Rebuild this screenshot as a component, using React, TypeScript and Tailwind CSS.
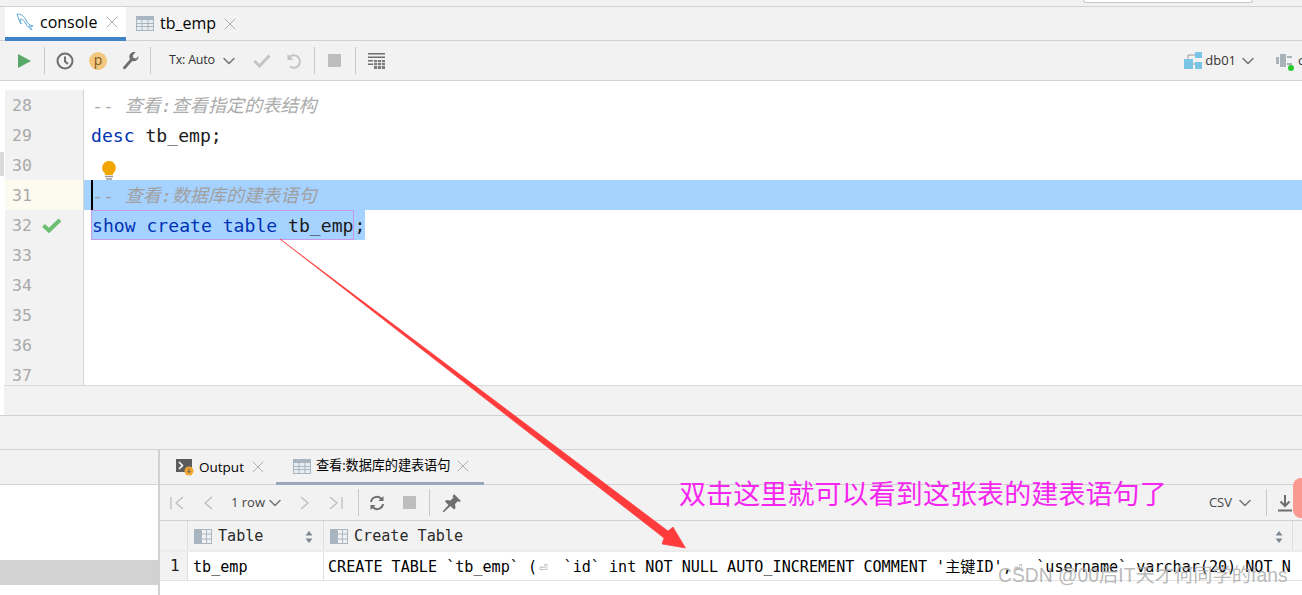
import React from "react";
import { ChevronDown, X } from "lucide-react";

const mono = "font-['DejaVu_Sans_Mono','Noto_Sans_CJK_SC',monospace]";
const ui = "font-['Open_Sans','Noto_Sans_CJK_SC',sans-serif]";

function TableIcon({ className = "" }: { className?: string }) {
  return (
    <svg width="18" height="15" viewBox="0 0 18 15" className={className}>
      <rect x="0" y="0" width="18" height="15" fill="#a9b5c0" />
      <rect x="1" y="4" width="16" height="10" fill="#e8edf0" />
      <path d="M6 4v10M12 4v10M1 7.5h16M1 10.5h16" stroke="#a9b5c0" strokeWidth="1" />
    </svg>
  );
}

function ColIcon() {
  return (
    <svg width="18" height="15" viewBox="0 0 18 15" className="shrink-0">
      <rect x="0" y="0" width="7" height="15" fill="#a9b5c0" />
      <rect x="7.5" y="0.5" width="10" height="14" fill="#f2f2f2" stroke="#a9b5c0" />
      <path d="M8 5h9M8 10h9M12.5 1v13" stroke="#a9b5c0" />
    </svg>
  );
}

function Sep() {
  return <div className="w-px h-[27px] bg-[#c9c9c9] shrink-0" />;
}

function Close({ className = "" }: { className?: string }) {
  return <X size={20} strokeWidth={1.1} className={`-my-[3px] -mr-[3px] shrink-0 text-[#a8a8a8] ${className}`} />;
}

function Chev({ className = "" }: { className?: string }) {
  return <ChevronDown size={20} strokeWidth={1.9} className={`-my-[3px] -mr-[3px] shrink-0 text-[#777] ${className}`} />;
}

function SortIcon() {
  return (
    <svg width="8" height="12" viewBox="0 0 8 12">
      <path d="M4 0l3.5 4.5h-7zM4 12L.5 7.5h7z" fill="#7f8790" />
    </svg>
  );
}

const lines: { n: number; content?: React.ReactNode; current?: boolean; check?: boolean; selected?: boolean }[] = [
  { n: 28, content: <span className="text-[#ababab] ml-px">-- <span className="italic">查看:查看指定的表结构</span></span> },
  { n: 29, content: <span><span className="text-[#0033b3]">desc</span> tb_emp;</span> },
  { n: 30 },
  { n: 31, current: true, selected: true, content: <span className="text-[#a0a0a0] ml-px">-- <span className="italic">查看:数据库的建表语句</span></span> },
  {
    n: 32,
    check: true,
    content: (
      <span className="bg-[#a6d2ff] inline-block align-top h-[30px]">
        <span className="inline-block align-top border border-[#c79ae8] h-[30px] leading-[30px]">
          <span className="text-[#0033b3]">show create table</span> tb_emp
        </span>
        <span className="inline-block align-top leading-[32px]">;</span>
      </span>
    ),
  },
  { n: 33 },
  { n: 34 },
  { n: 35 },
  { n: 36 },
  { n: 37 },
];

export default function App() {
  return (
    <div className={`relative w-[1302px] h-[595px] overflow-hidden bg-white text-black ${ui}`}>
      {/* top strip */}
      <div className="h-[7px] bg-[#f2f2f2] border-b border-[#d1d1d1] flex justify-end">
        <div className="w-[170px] h-[3px] mr-[49px] bg-white border-x border-b border-[#c8c8c8] rounded-b-[3px]" />
      </div>

      {/* tabs */}
      <div className="h-[34px] bg-[#f2f2f2] border-b border-[#d1d1d1] flex pl-[5px] items-stretch">
        <div className="w-[121px] bg-white border-b-[4px] border-[#4083c9] flex items-center pl-[11px] -mb-px">
          <svg width="19" height="18" viewBox="0 0 19 18" fill="none" stroke="#5fa8d8" strokeWidth="1">
            <path d="M1 1c4 0 7 2 9 6 1 3 3 5 7 6-2 1-3 0-4 0 1 1 2 2 3 4-3-2-5-4-6-6C9 8 6 6 4 6c0 2 1 3 1 5C3 8 2 4 1 1z" />
          </svg>
          <span className="ml-[5px] text-[16px] leading-none -mt-px">console</span>
          <Close className="ml-[5px]" />
        </div>
        <div className="flex items-center pl-[10px]">
          <TableIcon />
          <span className="ml-[6px] text-[16px] leading-none -mt-px">tb_emp</span>
          <Close className="ml-[4px]" />
        </div>
      </div>

      {/* toolbar */}
      <div className="h-[40px] bg-[#f2f2f2] border-b border-[#d1d1d1] flex items-center pl-[18px] relative overflow-hidden">
        <svg width="13" height="14" viewBox="0 0 13 14"><path d="M0 0l13 7-13 7z" fill="#59a869" /></svg>
        <div className="ml-[13px]"><Sep /></div>
        <svg width="18" height="18" viewBox="0 0 18 18" fill="none" stroke="#6e6e6e" strokeWidth="2" className="ml-[11px]">
          <circle cx="9" cy="9" r="7.5" /><path d="M9 4.5V9.5l3 2.5" />
        </svg>
        <div className="ml-[15px] w-[18px] h-[18px] rounded-full bg-[#f4c77e] flex items-center justify-center text-[14px] leading-none text-[#7a5a24] pb-[2px]">p</div>
        <svg width="18" height="18" viewBox="0 0 18 18" className="ml-[14px]">
          <path d="M17.500 4.500a4.800 4.800 0 0 1-6.200 4.600L4.500 16.800c-1.100 1.200-3.300-.6-2.200-1.900L9 7.300A4.800 4.800 0 0 1 14.700.3L11.800 3.200l.6 2.700 2.700.6 2.200-2.300z" fill="#6e6e6e" />
        </svg>
        <div className="ml-[11px]"><Sep /></div>
        <span className="ml-[18px] text-[12.500px] text-[#333] tracking-[-0.2px]">Tx: Auto</span>
        <Chev className="ml-[4px]" />
        <svg width="18" height="14" viewBox="0 0 18 14" fill="none" stroke="#c4c4c4" strokeWidth="3" className="ml-[17px]"><path d="M1.500 7l5 5L16.500 1.500" /></svg>
        <svg width="16" height="16" viewBox="0 0 16 16" fill="none" className="ml-[15px]">
          <path d="M4 13.500A6.200 6.200 0 1 0 3.500 4" stroke="#c4c4c4" strokeWidth="2" />
          <path d="M1.500 1v6h6z" fill="#c4c4c4" />
        </svg>
        <div className="ml-[12px]"><Sep /></div>
        <div className="ml-[13px] w-[13px] h-[13px] bg-[#bdbdbd]" />
        <div className="ml-[14px]"><Sep /></div>
        <svg width="17" height="16" viewBox="0 0 17 16" className="ml-[12px]" fill="#6e6e6e">
          <path d="M0 0h17v1.500H0zM0 3.500h17V5H0zM0 7h5v1.500H0zM0 10.500h5V12H0z" />
          <path d="M6 7h11v9H6z" fill="#7c7c7c" />
          <path d="M6 9.500h11M6 12.500h11M9.500 7v9M13.500 7v9" stroke="#f2f2f2" strokeWidth=".8" />
        </svg>
        <div className="ml-auto flex items-center shrink-0 mr-[-42px]">
          <svg width="18" height="17" viewBox="0 0 18 17" fill="#7ac5e6">
            <rect x="11" y="0" width="7" height="6" /><rect x="0" y="7" width="9" height="10" /><rect x="11" y="10" width="7" height="7" />
            <path d="M4 7V3h7M9 12h2" fill="none" stroke="#9a9a9a" />
          </svg>
          <span className="ml-[3px] text-[13px] text-[#333]">db01</span>
          <Chev className="ml-[2px]" />
          <div className="w-[68px] ml-[21px] flex items-center">
            <div className="relative w-[18px] h-[16px] shrink-0">
              <svg width="18" height="15" viewBox="0 0 18 15" fill="#a8b3ba"><path d="M0 4h3V11H0zM4 1h6v13H4zM11 3h5v2h-5zM11 10h5v2h-5z" /></svg>
              <div className="absolute right-[0px] -bottom-[2px] w-[6px] h-[6px] rounded-full bg-[#27c92d]" />
            </div>
            <span className="ml-[4px] text-[13px] text-[#333]">console</span>
          </div>
        </div>
      </div>

      {/* editor */}
      <div className="flex h-[304px]">
        <div className="w-[5px] bg-white flex flex-col">
          <div className="h-[71px]" />
          <div className="h-[24px] bg-[#d9d9d9] w-[4px]" />
        </div>
        <div className={`flex-1 pt-[9px] overflow-hidden text-[18.100px] ${mono} text-[#1a1a1a]`}>
          {lines.map((l) => (
            <div key={l.n} className="flex h-[30px] items-stretch">
              <div className={`w-[78px] shrink-0 flex items-center pl-[7px] pt-[2px] text-[16.500px] ${l.current ? "bg-[#fdfbf0]" : "bg-[#f2f2f2]"} text-[#a9a9a9]`}>
                <span>{l.n}</span>
                {l.check && (
                  <svg width="20" height="15" viewBox="0 0 20 15" fill="none" stroke="#6cbf73" strokeWidth="4" className="ml-[10px] -mt-[2px]"><path d="M1.500 7.500l5.500 5L18 2" /></svg>
                )}
              </div>
              <div className="w-px bg-[#d4d4d4] shrink-0" />
              <div className={`relative flex-1 pl-[7px] leading-[32px] h-[30px] whitespace-nowrap ${l.selected ? "bg-[#a6d2ff]" : ""}`}>
                {l.current && <div className="absolute left-[7px] top-0 w-[2px] h-[30px] bg-black" />}
                {l.n === 30 && (
                  <svg width="14" height="20" viewBox="0 0 14 20" className="absolute left-[18px] top-[11px]">
                    <path d="M7 0a7 7 0 0 1 4 12.600V14H3v-1.400A7 7 0 0 1 7 0z" fill="#f2a600" />
                    <path d="M3 15.500h8M4 18h6" stroke="#9a9a9a" strokeWidth="1.600" />
                  </svg>
                )}
                {l.content}
              </div>
            </div>
          ))}
        </div>
      </div>

      {/* gaps */}
      <div className="h-[30px] bg-[#f2f2f2] border-t border-[#d9d9d9] ml-[4px]" />
      <div className="h-[35px] bg-[#f2f2f2] border-y border-[#d1d1d1]" />

      {/* bottom */}
      <div className="flex h-[145px]">
        <div className="w-[160px] shrink-0 border-r-[2px] border-[#d1d1d1] flex flex-col">
          <div className="h-[35px] bg-[#f2f2f2] border-b border-[#d1d1d1] shrink-0" />
          <div className="h-[75px] shrink-0" />
          <div className="h-[25px] bg-[#d2d2d2] shrink-0" />
        </div>
        <div className="flex-1 min-w-0 flex flex-col">
          <div className="h-[35px] bg-[#f2f2f2] border-b border-[#d1d1d1] flex shrink-0">
            <div className="flex items-center pl-[16px] w-[116px]">
              <svg width="18" height="18" viewBox="0 0 18 18">
                <rect x="0" y="1" width="16" height="13" fill="#5c5c5c" />
                <path d="M3 4l3.500 3.500L3 11" fill="none" stroke="#fff" strokeWidth="1.500" />
                <circle cx="13" cy="13" r="4.500" fill="#f0a732" />
                <path d="M13 10.500v4M11.500 13l1.500 1.600 1.500-1.600" fill="none" stroke="#5c5c5c" />
              </svg>
              <span className="ml-[5px] text-[13.500px]">Output</span>
              <Close className="ml-[4px]" />
            </div>
            <div className="w-[208px] border-b-[3px] border-[#9aa7bd] -mb-px flex items-center pl-[17px]">
              <TableIcon />
              <span className="ml-[5px] text-[13.200px] tracking-[-0.1px]">查看:数据库的建表语句</span>
              <Close className="ml-[3px]" />
            </div>
          </div>
          <div className="h-[36px] bg-[#f2f2f2] border-b border-[#d1d1d1] flex items-center shrink-0 pl-[10px] text-[#bdbdbd]">
            <svg width="14" height="14" viewBox="0 0 14 14" fill="none" stroke="#bdbdbd" strokeWidth="1.300"><path d="M1 1v12M13 1L6 7l7 6" /></svg>
            <svg width="9" height="14" viewBox="0 0 9 14" fill="none" stroke="#bdbdbd" strokeWidth="1.300" className="ml-[20px]"><path d="M8 1L1 7l7 6" /></svg>
            <span className="ml-[18px] text-[13px] text-[#444]">1 row</span>
            <Chev className="ml-0" />
            <svg width="9" height="14" viewBox="0 0 9 14" fill="none" stroke="#bdbdbd" strokeWidth="1.300" className="ml-[18px]"><path d="M1 1l7 6-7 6" /></svg>
            <svg width="14" height="14" viewBox="0 0 14 14" fill="none" stroke="#bdbdbd" strokeWidth="1.300" className="ml-[20px]"><path d="M1 1l7 6-7 6M13 1v12" /></svg>
            <div className="ml-[15px]"><Sep /></div>
            <svg width="16" height="16" viewBox="0 0 16 16" fill="none" stroke="#6e6e6e" strokeWidth="2" className="ml-[10px]">
              <path d="M2 7a6 6 0 0 1 10.500-3M14 9a6 6 0 0 1-10.500 3" />
              <path d="M14.500 1v5h-5zM1.500 15v-5h5z" fill="#6e6e6e" stroke="none" />
            </svg>
            <div className="ml-[18px] w-[13px] h-[13px] bg-[#bdbdbd]" />
            <div className="ml-[13px]"><Sep /></div>
            <svg width="18" height="18" viewBox="0 0 18 18" className="ml-[13px]" fill="#6e6e6e">
              <path d="M11 0l7 7-2 1-1-1-3 3 .5 4-1.500 1.500-3.500-3.500L1 18l-1 0 0-1 5.500-6L2 7.500 3.500 6l4 .5 3-3-1-1z" />
            </svg>
            <span className="ml-auto text-[13px] text-[#444]">CSV</span>
            <Chev className="ml-[3px]" />
            <div className="ml-[14px]"><Sep /></div>
            <svg width="16" height="18" viewBox="0 0 16 18" className="ml-[10px] mr-[9px] shrink-0" fill="none" stroke="#6e6e6e" strokeWidth="2">
              <path d="M8 1v10M3.500 7.500L8 12l4.500-4.500M1 16.500h14" />
            </svg>
          </div>
          <div className={`h-[31px] bg-[#f2f2f2] border-b-[2px] border-[#ececec] flex shrink-0 text-[15.100px] ${mono}`}>
            <div className="w-[28px] shrink-0 border-r border-[#dedede]" />
            <div className="w-[136px] shrink-0 border-r border-[#dedede] flex items-center pl-[6px] pt-[2px]">
              <ColIcon />
              <span className="ml-[6px] text-[#2a2a2a]">Table</span>
              <span className="ml-auto mr-[10px] flex"><SortIcon /></span>
            </div>
            <div className="flex-1 flex items-center pl-[6px] pt-[2px] border-r border-[#dedede] mr-[9px]">
              <ColIcon />
              <span className="ml-[6px] text-[#2a2a2a]">Create Table</span>
              <span className="ml-auto mr-[9px] flex"><SortIcon /></span>
            </div>
          </div>
          <div className={`h-[29px] flex shrink-0 border-b border-[#e3e3e3] text-[15.100px] leading-[30px] ${mono}`}>
            <div className="w-[28px] shrink-0 bg-[#f2f2f2] border-r border-[#dedede] pl-[10px] text-[#222] text-[16px] leading-[28px]">1</div>
            <div className="w-[136px] shrink-0 border-r border-[#dedede] pl-[5px]">tb_emp</div>
            <div className="flex-1 pl-[4px] whitespace-nowrap overflow-hidden mr-[9px]">
              CREATE TABLE `tb_emp` (<span className="text-[#999] text-[14px] ml-[2px] mr-[7px]">⏎</span> `id` int NOT NULL AUTO_INCREMENT COMMENT '主键ID',<span className="text-[#999] text-[14px] ml-[2px] mr-[5px]">⏎</span> `username` varchar(20) NOT N
            </div>
          </div>
        </div>
      </div>

      {/* annotations drawn over the screenshot */}
      <svg width="1302" height="595" viewBox="0 0 1302 595" className="absolute inset-0 pointer-events-none">
        <path d="M280 239L668 531L673 527L685.500 548L662 544L664 538Z" fill="#ff3b3b" stroke="#ff3b3b" strokeWidth="0.600" />
      </svg>
      <div className="absolute left-[679px] top-[475px] text-[27px] leading-[36px] text-[#f626f0] font-['Noto_Sans_CJK_SC',sans-serif] whitespace-nowrap tracking-[0.100px]">
        双击这里就可以看到这张表的建表语句了
      </div>
      <div className="absolute left-[998px] top-[564px] text-[19.300px] leading-[24px] text-[#a8a8a8]/80 font-['Liberation_Sans','Noto_Sans_CJK_SC',sans-serif] whitespace-nowrap">
        CSDN @00后IT天才何同学的fans
      </div>
      <div className="absolute right-0 top-[478px] w-[9px] h-[40px] rounded-l-[8px] bg-[#f99a90]" />
    </div>
  );
}
